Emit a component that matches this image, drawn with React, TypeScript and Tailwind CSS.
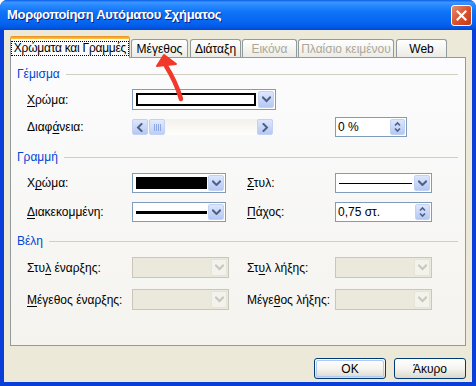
import React from "react";

const F = "font-['Liberation_Sans',Arial,sans-serif]";

function Chev({ dir = "down", color = "#4d6185" }: { dir?: "down" | "up" | "left" | "right"; color?: string }) {
  const paths: Record<string, string> = {
    down: "M1 1.5 L4.5 5 L8 1.5",
    up: "M1 5 L4.5 1.5 L8 5",
    left: "M5.5 1 L2 4.5 L5.5 8",
    right: "M2.5 1 L6 4.5 L2.5 8",
  };
  const vb = dir === "down" || dir === "up" ? "0 0 9 6.5" : "0 0 8 9";
  const w = dir === "down" || dir === "up" ? 9 : 8;
  const h = dir === "down" || dir === "up" ? 6.5 : 9;
  return (
    <svg width={w} height={h} viewBox={vb}>
      <path d={paths[dir]} fill="none" stroke={color} strokeWidth="2" strokeLinecap="square" />
    </svg>
  );
}

function DropBtn({ disabled }: { disabled?: boolean }) {
  return (
    <div
      className={
        "w-[16px] h-full flex items-center justify-center rounded-[2px] border " +
        (disabled
          ? "bg-[#f3f2ec] border-[#e6e4da]"
          : "bg-gradient-to-b from-[#dde7fd] to-[#b5c8f4] border-[#c3d1f3]")
      }
    >
      <Chev color={disabled ? "#c9c7ba" : "#4d6185"} />
    </div>
  );
}

function Combo({ w, h = 21, disabled, children }: { w: number; h?: number; disabled?: boolean; children?: React.ReactNode }) {
  return (
    <div
      style={{ width: w, height: h }}
      className={
        "flex border p-[1px] " +
        (disabled ? "border-[#c9c7ba] bg-[#ebe9dc]" : "border-[#7f9db9] bg-white")
      }
    >
      <div className="flex-1 min-w-0 relative">{children}</div>
      <DropBtn disabled={disabled} />
    </div>
  );
}

function Spinner({ w, text }: { w: number; text: string }) {
  return (
    <div style={{ width: w }} className="h-[20px] flex border border-[#7f9db9] bg-white p-[1px]">
      <div className={"flex-1 flex items-center pl-[1px] text-[12px] text-black " + F}>{text}</div>
      <div className="w-[15px] h-full flex flex-col gap-[1px] rounded-[2px] border border-[#c3d1f3] bg-gradient-to-b from-[#dde7fd] to-[#b5c8f4] items-center justify-center">
        <svg width="7" height="12" viewBox="0 0 7 12">
          <path d="M1 4.5 L3.5 2 L6 4.5" fill="none" stroke="#4d6185" strokeWidth="1.6" />
          <path d="M1 7.5 L3.5 10 L6 7.5" fill="none" stroke="#4d6185" strokeWidth="1.6" />
        </svg>
      </div>
    </div>
  );
}

function Header({ text, mt }: { text: string; mt: number }) {
  return (
    <div style={{ marginTop: mt }} className="h-[14px] flex items-center pl-[6px] pr-[7px]">
      <span className={"text-[12px] text-[#0046d5] pr-[6px] " + F}>{text}</span>
      <div className="flex-1 h-px bg-[#d0d0bf]" />
    </div>
  );
}

function Label({ children, w }: { children: React.ReactNode; w: number }) {
  return (
    <div style={{ width: w }} className={"shrink-0 whitespace-nowrap text-[12px] text-black " + F}>
      {children}
    </div>
  );
}

function U({ children }: { children: React.ReactNode }) {
  return <span className="underline underline-offset-2">{children}</span>;
}

function ScrollBar() {
  return (
    <div className="w-[141px] h-[16px] flex bg-gradient-to-b from-[#f3f1ec] to-[#fefefb]">
      <div className="w-[16px] h-[16px] rounded-[2px] border border-[#c3d1f3] bg-gradient-to-b from-[#dde7fd] to-[#b5c8f4] flex items-center justify-center">
        <Chev dir="left" />
      </div>
      <div className="w-[16px] h-[16px] ml-[1px] rounded-[2px] border border-[#c3d1f3] bg-gradient-to-b from-[#e3ebfe] to-[#bdcff8] flex items-center justify-center gap-[1px]">
        <div className="w-px h-[7px] bg-[#8fa8e3]" />
        <div className="w-px h-[7px] bg-[#8fa8e3]" />
        <div className="w-px h-[7px] bg-[#8fa8e3]" />
        <div className="w-px h-[7px] bg-[#8fa8e3]" />
      </div>
      <div className="flex-1" />
      <div className="w-[16px] h-[16px] rounded-[2px] border border-[#c3d1f3] bg-gradient-to-b from-[#dde7fd] to-[#b5c8f4] flex items-center justify-center">
        <Chev dir="right" />
      </div>
    </div>
  );
}

function Tab({ text, w, ml, selected, disabled }: { text: string; w: number; ml: number; selected?: boolean; disabled?: boolean }) {
  if (selected) {
    return (
      <div
        style={{ width: w, marginLeft: ml }}
        className="h-[22px] relative z-10 -mb-px bg-[#fcfcfe] border-x border-[#919b9c] rounded-t-[3px] flex flex-col"
      >
        <div className="h-[3px] rounded-t-[3px] bg-gradient-to-b from-[#e68b2c] to-[#ffc73c] -mx-px" />
        <div className="flex-1 flex items-center justify-center">
          <span className={"whitespace-nowrap text-[12px] tracking-[-0.25px] text-black px-[2px] leading-[13px] border border-dotted border-black " + F}>
            {text}
          </span>
        </div>
      </div>
    );
  }
  return (
    <div
      style={{ width: w, marginLeft: ml }}
      className="h-[18px] border-x border-t border-[#919b9c] rounded-t-[3px] bg-gradient-to-b from-[#ffffff] to-[#ecebe5] flex items-center justify-center"
    >
      <span className={"whitespace-nowrap text-[12px] " + F + (disabled ? " text-[#aca899]" : " text-black")}>{text}</span>
    </div>
  );
}

function XPButton({ text, def }: { text: string; def?: boolean }) {
  return (
    <div className="w-[72px] h-[21px] rounded-[3px] border border-[#003c74] bg-gradient-to-b from-[#ffffff] via-[#f5f4f0] to-[#dcd8cc] p-[1px]">
      <div
        className={
          "w-full h-full rounded-[2px] flex items-center justify-center text-[12px] text-black " +
          F +
          (def ? " border border-[#b0c8f2]" : "")
        }
      >
        {text}
      </div>
    </div>
  );
}

export default function App() {
  return (
    <div className="relative w-[476px] h-[386px] overflow-hidden bg-[#0a3ed8] rounded-t-[7px] flex flex-col">
      {/* Title bar */}
      <div
        className="h-[30px] shrink-0 flex items-center pl-[7px] pr-[4px] rounded-t-[7px]"
        style={{
          background:
            "linear-gradient(to bottom, #0a5fe8 0%, #3d95ff 8%, #2a8bff 16%, #0f73f8 40%, #0665f0 75%, #0358e6 90%, #0049cf 100%)",
        }}
      >
        <span className={"flex-1 text-[13px] font-bold text-white tracking-[-0.3px] [text-shadow:1px_1px_0_#0a1f8a] " + F}>
          Μορφοποίηση Αυτόματου Σχήματος
        </span>
        <div className="w-[21px] h-[21px] rounded-[3px] border border-white bg-gradient-to-br from-[#ea8a6c] via-[#d8532e] to-[#c23a17] flex items-center justify-center">
          <svg width="11" height="11" viewBox="0 0 11 11">
            <path d="M1.5 1.5 L9.5 9.5 M9.5 1.5 L1.5 9.5" stroke="white" strokeWidth="2.2" strokeLinecap="square" />
          </svg>
        </div>
      </div>

      {/* Client area */}
      <div className="flex-1 mx-[4px] mb-[4px] bg-[#ece9d8] flex flex-col">
        {/* Tabs */}
        <div className="h-[27px] flex items-end pt-[6px]">
          <Tab text="Χρώματα και Γραμμές" w={120} ml={6} selected />
          <Tab text="Μέγεθος" w={57} ml={1} />
          <Tab text="Διάταξη" w={51} ml={2} />
          <Tab text="Εικόνα" w={55} ml={1} disabled />
          <Tab text="Πλαίσιο κειμένου" w={96} ml={1} disabled />
          <Tab text="Web" w={51} ml={2} />
        </div>

        {/* Panel */}
        <div className="ml-[6px] w-[456px] h-[289px] border border-[#919b9c] bg-gradient-to-b from-[#fcfcfe] to-[#f4f3ee] flex flex-col">
          <Header text="Γέμισμα" mt={9} />
          {/* Fill color */}
          <div className="mt-[8px] h-[21px] flex items-center pl-[16px]">
            <Label w={105}>
              <U>Χ</U>ρώμα:
            </Label>
            <Combo w={144}>
              <div className="absolute left-[2px] top-[2px] right-[2px] bottom-[2px] border-2 border-black bg-white" />
            </Combo>
          </div>
          {/* Transparency */}
          <div className="mt-[7px] h-[20px] flex items-center pl-[16px]">
            <Label w={105}>
              Διαφ<U>ά</U>νεια:
            </Label>
            <ScrollBar />
            <div className="w-[62px]" />
            <Spinner w={72} text="0 %" />
          </div>

          <Header text="Γραμμή" mt={13} />
          <div className="mt-[9px] h-[20px] flex items-center pl-[16px]">
            <Label w={105}>
              Χ<U>ρ</U>ώμα:
            </Label>
            <Combo w={94} h={20}>
              <div className="absolute left-[2px] top-[2px] right-[1px] bottom-[2px] bg-black" />
            </Combo>
            <div className="w-[21px]" />
            <Label w={88}>
              <U>Σ</U>τυλ:
            </Label>
            <Combo w={97} h={20}>
              <div className="absolute left-[2px] right-[2px] top-[8px] h-px bg-black" />
            </Combo>
          </div>
          <div className="mt-[9px] h-[20px] flex items-center pl-[16px]">
            <Label w={105}>
              <U>Δ</U>ιακεκομμένη:
            </Label>
            <Combo w={94} h={20}>
              <div className="absolute left-[2px] right-[1px] top-[7px] h-[3px] bg-black" />
            </Combo>
            <div className="w-[21px]" />
            <Label w={88}>
              <U>Π</U>άχος:
            </Label>
            <Spinner w={97} text="0,75 στ." />
          </div>

          <Header text="Βέλη" mt={12} />
          <div className="mt-[9px] h-[21px] flex items-center pl-[16px]">
            <Label w={105}>
              Στυ<U>λ</U> έναρξης:
            </Label>
            <Combo w={97} disabled />
            <div className="w-[18px]" />
            <Label w={88}>
              Στ<U>υ</U>λ λήξης:
            </Label>
            <Combo w={97} disabled />
          </div>
          <div className="mt-[11px] h-[21px] flex items-center pl-[16px]">
            <Label w={105}>
              <U>Μ</U>έγεθος έναρξης:
            </Label>
            <Combo w={97} disabled />
            <div className="w-[18px]" />
            <Label w={88}>
              Μέγε<U>θ</U>ος λήξης:
            </Label>
            <Combo w={97} disabled />
          </div>
        </div>

        {/* Buttons */}
        <div className="mt-[12px] flex justify-end gap-[8px] pr-[6px]">
          <XPButton text="OK" def />
          <XPButton text="Άκυρο" />
        </div>
      </div>

      {/* Red annotation arrow */}
      <svg className="absolute left-0 top-0 pointer-events-none" width="476" height="386">
        <path d="M181 99 Q176 82 166 66" fill="none" stroke="#f0392b" strokeWidth="4.5" strokeLinecap="round" />
        <path d="M157 66 L164 55 L176 64 Z" fill="#f0392b" stroke="#f0392b" strokeWidth="2" strokeLinejoin="round" />
      </svg>
    </div>
  );
}
